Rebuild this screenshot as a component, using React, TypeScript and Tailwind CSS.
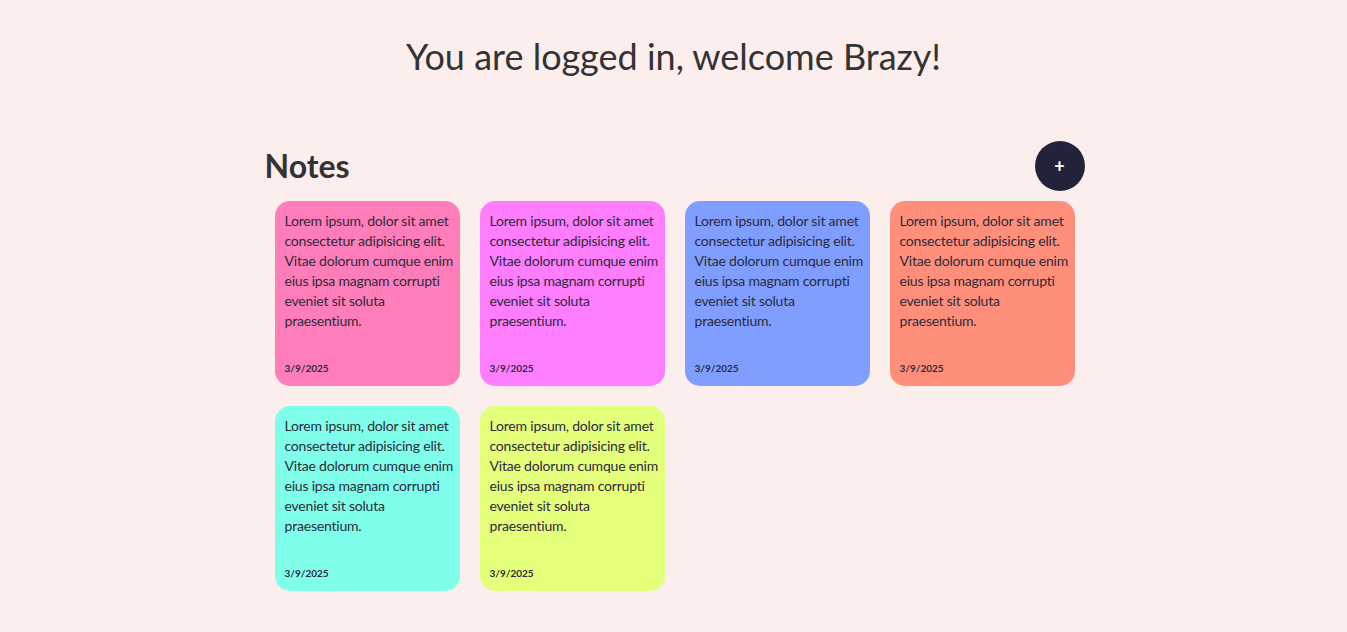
import React from "react";

interface Note {
  id: number;
  text: string;
  date: string;
  color: string;
}

const LOREM =
  "Lorem ipsum, dolor sit amet consectetur adipisicing elit. Vitae dolorum cumque enim eius ipsa magnam corrupti eveniet sit soluta praesentium.";

const notes: Note[] = [
  { id: 1, text: LOREM, date: "3/9/2025", color: "bg-[#ff7eb9]" },
  { id: 2, text: LOREM, date: "3/9/2025", color: "bg-[#ff7eff]" },
  { id: 3, text: LOREM, date: "3/9/2025", color: "bg-[#7f9eff]" },
  { id: 4, text: LOREM, date: "3/9/2025", color: "bg-[#ff8f7b]" },
  { id: 5, text: LOREM, date: "3/9/2025", color: "bg-[#7fffea]" },
  { id: 6, text: LOREM, date: "3/9/2025", color: "bg-[#e4ff7a]" },
];

const NoteCard: React.FC<{ note: Note }> = ({ note }) => (
  <div
    className={`${note.color} h-[185px] rounded-[15px] pl-[10px] pr-[2px] pt-[10px] pb-[10px] flex flex-col justify-between`}
  >
    <p className="text-[14px] leading-[20px] tracking-[-0.2px] text-[#2b2b3a]">
      {note.text}
    </p>
    <span className="text-[10px] leading-[16px] font-bold text-[#2b2b3a]">
      {note.date}
    </span>
  </div>
);

export default function App() {
  return (
    <div
      className="min-h-[632px] bg-[#fdeeee] text-[#333333]"
      style={{ fontFamily: "Lato, 'Noto Sans', sans-serif" }}
    >
      <h1 className="pt-[34px] text-center text-[36px] leading-[44px] font-normal">
        You are logged in, welcome Brazy!
      </h1>

      <div className="mx-auto mt-[63px] w-[820px] translate-x-[1px]">
        <div className="flex items-center justify-between">
          <h2 className="text-[32px] leading-[40px] font-bold">Notes</h2>
          <button className="flex h-[50px] w-[50px] items-center justify-center rounded-full bg-[#22223b] text-[18px] font-bold text-white">
            +
          </button>
        </div>

        <div className="mt-[10px] grid grid-cols-4 gap-[20px] px-[10px]">
          {notes.map((note) => (
            <NoteCard key={note.id} note={note} />
          ))}
        </div>
      </div>
    </div>
  );
}
